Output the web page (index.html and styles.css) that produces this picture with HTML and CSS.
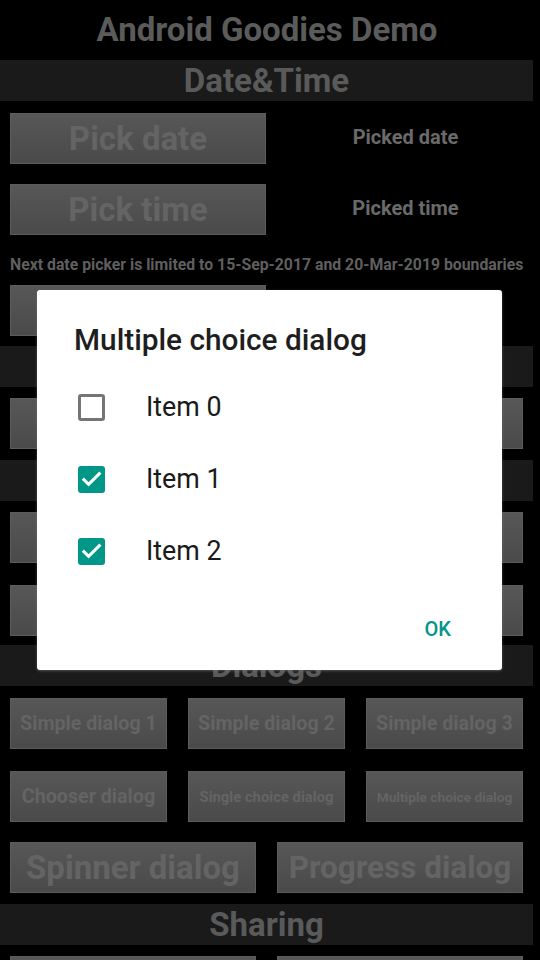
FILE: index.html
```html
<!DOCTYPE html>
<html>
<head>
<meta charset="utf-8">
<link rel="stylesheet" href="styles.css">
</head>
<body>
<div class="page">
  <div class="title">Android Goodies Demo</div>
  <div class="bar">Date&amp;Time</div>
  <div class="row pick first">
    <div class="btn big w256">Pick date</div>
    <div class="label">Picked date</div>
  </div>
  <div class="row pick gap20">
    <div class="btn big w256">Pick time</div>
    <div class="label">Picked time</div>
  </div>
  <div class="note">Next date picker is limited to 15-Sep-2017 and 20-Mar-2019 boundaries</div>
  <div class="row pick">
    <div class="btn big w256">Pick date</div>
    <div class="label">Picked date</div>
  </div>
  <div class="bar m10">Flashlight</div>
  <div class="row m11"><div class="btn big full">Toggle flashlight</div></div>
  <div class="bar m11">Notifications</div>
  <div class="row m11"><div class="btn big full">Show notification</div></div>
  <div class="row m22"><div class="btn big full">Start countdown with a timer</div></div>
  <div class="bar m9">Dialogs</div>
  <div class="row three m12">
    <div class="btn mid">Simple dialog 1</div>
    <div class="btn mid">Simple dialog 2</div>
    <div class="btn mid">Simple dialog 3</div>
  </div>
  <div class="row three m22">
    <div class="btn mid">Chooser dialog</div>
    <div class="btn small">Single choice dialog</div>
    <div class="btn tiny">Multiple choice dialog</div>
  </div>
  <div class="row two m20">
    <div class="btn big">Spinner dialog</div>
    <div class="btn big narrow">Progress dialog</div>
  </div>
  <div class="bar m11">Sharing</div>
  <div class="row two m11">
    <div class="btn big">Share text</div>
    <div class="btn big">Share image</div>
  </div>
</div>

<div class="dialog">
  <div class="d-title">Multiple choice dialog</div>
  <div class="d-list">
    <div class="d-item">
      <span class="cb"></span>
      <span class="d-text">Item 0</span>
    </div>
    <div class="d-item">
      <span class="cb on"><svg viewBox="0 0 27 27" width="27" height="27"><path d="M4.8 12.6 L10.6 18.4 L22.4 6.6" fill="none" stroke="#fff" stroke-width="3"/></svg></span>
      <span class="d-text">Item 1</span>
    </div>
    <div class="d-item">
      <span class="cb on"><svg viewBox="0 0 27 27" width="27" height="27"><path d="M4.8 12.6 L10.6 18.4 L22.4 6.6" fill="none" stroke="#fff" stroke-width="3"/></svg></span>
      <span class="d-text">Item 2</span>
    </div>
  </div>
  <div class="d-actions"><span class="ok">OK</span></div>
</div>
</body>
</html>
```
FILE: styles.css
```css
html, body {
  margin: 0;
  padding: 0;
  background: #000;
}
body {
  width: 540px;
  height: 960px;
  overflow: hidden;
  position: relative;
  font-family: Roboto, "Liberation Sans", sans-serif;
}
.page {
  width: 533px;
  display: flex;
  flex-direction: column;
}
.title {
  height: 60px;
  line-height: 60px;
  text-align: center;
  font-weight: 700;
  font-size: 33px;
  color: #5b5b5b;
  padding-left: 1px;
}
.bar {
  height: 41px;
  line-height: 41px;
  background: #1a1a1a;
  text-align: center;
  font-weight: 700;
  font-size: 33px;
  color: #5a5a5a;
}
.row {
  display: flex;
  padding: 0 10px;
  gap: 21px;
}
.row.first { margin-top: 12px; }
.row.gap20 { margin-top: 20px; }
.m9 { margin-top: 9px; }
.m10 { margin-top: 10px; }
.m11 { margin-top: 11px; }
.m12 { margin-top: 12px; }
.m20 { margin-top: 20px; }
.m22 { margin-top: 22px; }
.btn {
  height: 51px;
  box-sizing: border-box;
  border: 1px solid #5c5c5c;
  background: linear-gradient(#575757, #4a4a4a);
  color: #646464;
  font-weight: 700;
  display: flex;
  align-items: center;
  justify-content: center;
  white-space: nowrap;
  overflow: hidden;
}
.btn.big { font-size: 33px; }
.btn.big.narrow { font-size: 31.5px; }
.btn.mid { font-size: 19.7px; }
.btn.small { font-size: 14.8px; }
.btn.tiny { font-size: 13.7px; }
.w256 { width: 256px; flex: none; }
.full { flex: 1; }
.three .btn { flex: 1; }
.two .btn { flex: 1; }
.label {
  flex: 1;
  display: flex;
  align-items: center;
  justify-content: center;
  padding-left: 22px;
  padding-bottom: 3px;
  font-weight: 700;
  font-size: 20px;
  color: #6a6a6a;
}
.pick { gap: 0; }
.note {
  padding: 21px 0 12px 10px;
  line-height: 17px;
  font-size: 15.8px;
  font-weight: 700;
  color: #5f5f5f;
  white-space: nowrap;
}

.dialog {
  position: absolute;
  left: 37px;
  top: 290px;
  width: 465px;
  height: 380px;
  background: #fff;
  border-radius: 3px;
  box-shadow: 0 1px 3px rgba(120,120,120,0.6);
  display: flex;
  flex-direction: column;
}
.d-title {
  margin: 31px 0 0 37px;
  font-size: 29.8px;
  font-weight: 500;
  color: #1e1e1e;
  line-height: 38px;
}
.d-list {
  margin-top: 12px;
  display: flex;
  flex-direction: column;
}
.d-item {
  height: 72px;
  display: flex;
  align-items: center;
  padding-left: 41px;
}
.cb {
  width: 27px;
  height: 27px;
  box-sizing: border-box;
  border: 3px solid #757575;
  border-radius: 3px;
  flex: none;
  display: block;
}
.cb.on {
  border: none;
  background: #009688;
}
.cb svg { display: block; }
.d-text {
  margin-left: 41px;
  font-size: 26.8px;
  color: #1a1a1a;
}
.d-actions {
  margin-top: auto;
  height: 70px;
  display: flex;
  justify-content: flex-end;
  align-items: flex-start;
  padding-right: 51px;
}
.ok {
  color: #009688;
  font-size: 20px;
  font-weight: 500;
  line-height: 24px;
  margin-top: 17px;
}
```
